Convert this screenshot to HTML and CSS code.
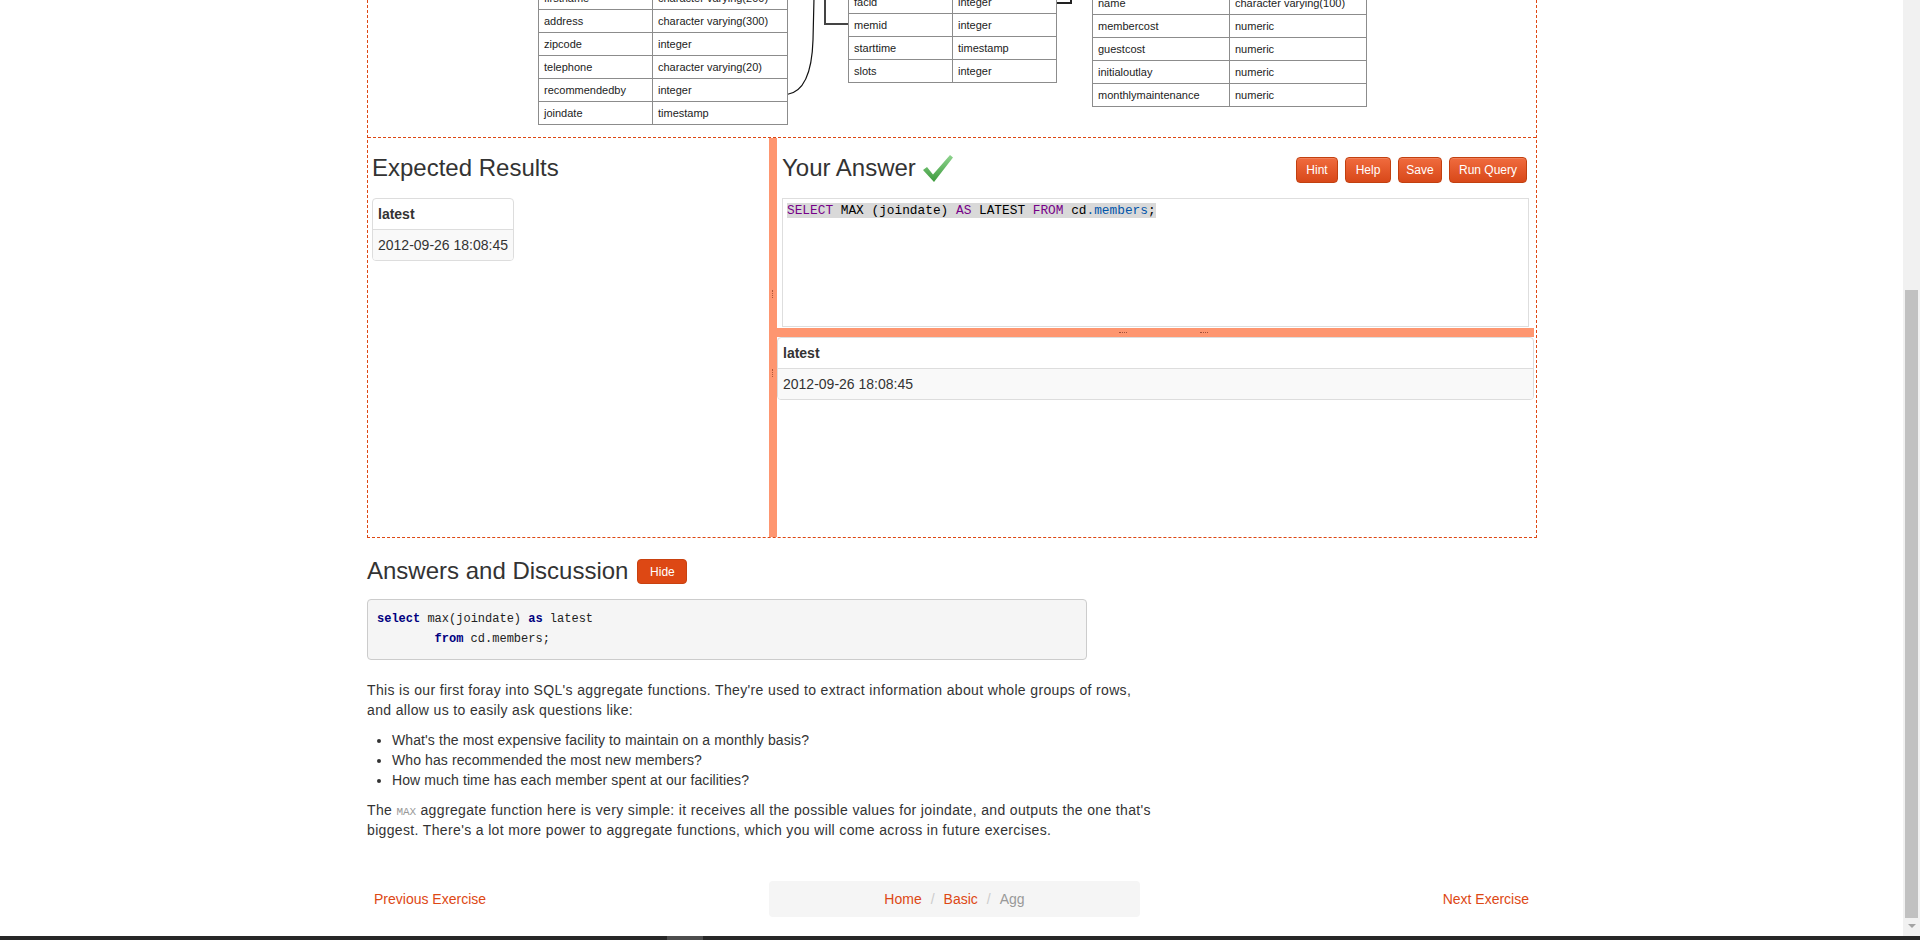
FILE: index.html
```html
<!DOCTYPE html>
<html>
<head>
<meta charset="utf-8">
<title>Exercise - Agg</title>
<link rel="stylesheet" href="styles.css">
</head>
<body>
<div class="page">
  <div class="container">
    <div class="exercise">
      <div class="schema">
        <div class="diagram">
          <svg class="links" width="1168" height="137" viewBox="0 0 1168 137">
            <path d="M419,94.5 C436,92 444,72 445,40 L446,-2" fill="none" stroke="#111" stroke-width="1.2"/>
            <path d="M457,-2 L457,24 L480,24" fill="none" stroke="#444" stroke-width="2"/>
            <path d="M688,3 L703,3 L703,-2" fill="none" stroke="#222" stroke-width="2"/>
          </svg>
          <table class="dtab members">
            <tr><td>memid</td><td>integer</td></tr>
            <tr><td>surname</td><td>character varying(200)</td></tr>
            <tr><td>firstname</td><td>character varying(200)</td></tr>
            <tr><td>address</td><td>character varying(300)</td></tr>
            <tr><td>zipcode</td><td>integer</td></tr>
            <tr><td>telephone</td><td>character varying(20)</td></tr>
            <tr><td>recommendedby</td><td>integer</td></tr>
            <tr><td>joindate</td><td>timestamp</td></tr>
          </table>
          <table class="dtab bookings">
            <tr><td>bookid</td><td>integer</td></tr>
            <tr><td>facid</td><td>integer</td></tr>
            <tr><td>memid</td><td>integer</td></tr>
            <tr><td>starttime</td><td>timestamp</td></tr>
            <tr><td>slots</td><td>integer</td></tr>
          </table>
          <table class="dtab facilities">
            <tr><td>facid</td><td>integer</td></tr>
            <tr><td>name</td><td>character varying(100)</td></tr>
            <tr><td>membercost</td><td>numeric</td></tr>
            <tr><td>guestcost</td><td>numeric</td></tr>
            <tr><td>initialoutlay</td><td>numeric</td></tr>
            <tr><td>monthlymaintenance</td><td>numeric</td></tr>
          </table>
        </div>
      </div>
      <div class="workspace">
        <div class="pane-left">
          <h3 class="pane-title">Expected Results</h3>
          <div class="result result-small">
            <table>
              <tr class="head"><th>latest</th></tr>
              <tr class="data"><td>2012-09-26 18:08:45</td></tr>
            </table>
          </div>
        </div>
        <div class="vsplit"><span class="vgrip vg1"></span><span class="vgrip vg2"></span></div>
        <div class="pane-right">
          <div class="answer-top">
            <div class="answer-head">
              <h3 class="pane-title">Your Answer</h3>
              <svg class="check" width="31" height="27" viewBox="0 0 31 27">
                <defs>
                  <linearGradient id="cg" x1="0" y1="0" x2="0" y2="1">
                    <stop offset="0" stop-color="#8fd48f"/>
                    <stop offset="1" stop-color="#3c9a3c"/>
                  </linearGradient>
                </defs>
                <polygon points="1,15 5,12 11,19.5 28,0 31,2.5 12,27" fill="url(#cg)"/>
              </svg>
              <div class="btns">
                <button class="btn b-hint">Hint</button>
                <button class="btn b-help">Help</button>
                <button class="btn b-save">Save</button>
                <button class="btn b-run">Run Query</button>
              </div>
            </div>
            <div class="editor">
              <div class="cm-line"><span class="sel"><span class="kw">SELECT</span> MAX (joindate) <span class="kw">AS</span> LATEST <span class="kw">FROM</span> cd<span class="var">.members</span>;</span></div>
            </div>
          </div>
          <div class="hsplit"><span class="hgrip hg1"></span><span class="hgrip hg2"></span></div>
          <div class="result result-wide">
            <table>
              <tr class="head"><th>latest</th></tr>
              <tr class="data"><td>2012-09-26 18:08:45</td></tr>
            </table>
          </div>
        </div>
      </div>
    </div>

    <div class="discussion">
      <div class="disc-head">
        <h3 class="disc-title">Answers and Discussion</h3>
        <button class="btn-hide">Hide</button>
      </div>
      <pre class="solution"><b>select</b> max(joindate) <b>as</b> latest
        <b>from</b> cd.members;</pre>
      <div class="text">
        <p>This is our first foray into SQL's aggregate functions. They're used to extract information about whole groups of rows,<br>and allow us to easily ask questions like:</p>
        <ul>
          <li>What's the most expensive facility to maintain on a monthly basis?</li>
          <li>Who has recommended the most new members?</li>
          <li>How much time has each member spent at our facilities?</li>
        </ul>
        <p>The <code>MAX</code> aggregate function here is very simple: it receives all the possible values for joindate, and outputs the one that's<br>biggest. There's a lot more power to aggregate functions, which you will come across in future exercises.</p>
      </div>
    </div>

    <div class="pager">
      <a class="prev" href="#">Previous Exercise</a>
      <div class="crumbs">
        <a href="#">Home</a><span class="sep">/</span><a href="#">Basic</a><span class="sep">/</span><span class="cur">Agg</span>
      </div>
      <a class="next" href="#">Next Exercise</a>
    </div>
  </div>
</div>
<div class="scrollbar"><div class="thumb"></div><div class="arrow"></div></div>
<div class="taskbar"><span class="seg"></span></div>
</body>
</html>
```

FILE: styles.css
```css
* { box-sizing: border-box; }
html, body { margin: 0; height: 100%; overflow: hidden; background: #fff; }
body {
  font-family: "Liberation Sans", Arial, sans-serif;
  font-size: 14px;
  line-height: 20px;
  color: #333;
}
a { color: #dd4814; text-decoration: none; }

.page { width: 1904px; }
.container { width: 1170px; margin: 0 auto; }

/* exercise box */
.exercise { border: 1px dashed #dd4814; border-top: 0; }
.schema {
  height: 138px;
  border-bottom: 1px dashed #dd4814;
  overflow: hidden;
}
.diagram { position: relative; height: 137px; }
.links { position: absolute; left: 0; top: 0; overflow: visible; }

.dtab {
  position: absolute;
  border-collapse: collapse;
  font-family: "Liberation Sans", Arial, sans-serif;
  font-size: 11px;
  color: #1c1c1c;
  background: #fff;
}
.dtab td {
  border: 1px solid #8c8c8c;
  height: 23px;
  padding: 0 0 0 5px;
  line-height: 14px;
  white-space: nowrap;
}
.members { left: 170px; top: -60px; }
.members td:first-child { width: 114px; }
.members td:last-child { width: 135px; }
.bookings { left: 480px; top: -33px; }
.bookings td { width: 104px; }
.facilities { left: 724px; top: -32px; }
.facilities td { width: 137px; }

/* workspace */
.workspace { display: flex; height: 399px; }
.pane-left { width: 401px; padding: 0 4px; }
.vsplit { width: 8px; background: #fe9670; position: relative; }
.vgrip { position: absolute; left: 3px; width: 1px; height: 8px; border-left: 1px dotted #b0583a; }
.vg1 { top: 152px; }
.vg2 { top: 231px; }
.pane-right { flex: 1; display: flex; flex-direction: column; }
.answer-top { padding: 0 7px 0 5px; }

.pane-title {
  margin: 17px 0;
  height: 26px;
  font-size: 24px;
  line-height: 26px;
  font-weight: 400;
  color: #333;
}
.answer-head { display: flex; align-items: flex-start; margin: 17px 0; height: 26px; }
.answer-head .pane-title { margin: 0; }
.check { margin-left: 6px; margin-top: 0; }
.btns { margin-left: auto; margin-right: 2px; margin-top: 2px; display: flex; gap: 7px; }
.btn {
  height: 26px;
  padding: 0;
  border: 1px solid #c2400f;
  border-radius: 4px;
  background: linear-gradient(#f06b3e, #d84819);
  color: #fff;
  font-family: "Liberation Sans", Arial, sans-serif;
  font-size: 12px;
  line-height: 24px;
  text-align: center;
  box-shadow: inset 0 1px 0 rgba(255,255,255,0.15);
}
.b-hint { width: 42px; }
.b-help { width: 46px; }
.b-save { width: 44px; }
.b-run { width: 78px; }

.editor {
  height: 129px;
  border: 1px solid #dedede;
  padding: 4px 4px 0 4px;
  font-family: "Liberation Mono", "DejaVu Sans Mono", monospace;
  font-size: 12.8px;
  line-height: 15px;
  color: #000;
}
.sel { background: #d9d9d9; }
.kw { color: #770088; }
.var { color: #0055aa; }

.hsplit { height: 9px; margin-top: 1px; margin-right: 2px; background: #fe9670; position: relative; }
.hgrip { position: absolute; top: 4px; width: 8px; height: 1px; border-top: 1px dotted #a0503a; }
.hg1 { left: 342px; }
.hg2 { left: 423px; }

.result {
  border: 1px solid #ddd;
  border-radius: 4px;
  overflow: hidden;
}
.result table { width: 100%; border-collapse: separate; border-spacing: 0; }
.result th, .result td { padding: 5px; line-height: 20px; text-align: left; white-space: nowrap; }
.result th { font-weight: 700; }
.result .data td { border-top: 1px solid #ddd; background: #f9f9f9; }
.result-small { display: inline-block; vertical-align: top; min-width: 140px; }
.result-wide { margin-right: 2px; }

/* discussion */
.disc-head { display: flex; align-items: flex-start; margin-top: 20px; height: 26px; }
.disc-title { margin: 0; font-size: 24px; line-height: 26px; font-weight: 400; color: #333; }
.btn-hide {
  margin-left: 9px;
  margin-top: 1px;
  width: 50px;
  height: 25px;
  padding: 0;
  border: 1px solid #c9410f;
  border-radius: 4px;
  background: #dd4814;
  color: #fff;
  font-family: "Liberation Sans", Arial, sans-serif;
  font-size: 12px;
}
.solution {
  width: 720px;
  margin: 15px 0 20px;
  padding: 9px 9px 10px;
  background: #f5f5f5;
  border: 1px solid #ccc;
  border-radius: 4px;
  font-family: "Liberation Mono", "DejaVu Sans Mono", monospace;
  font-size: 12px;
  line-height: 20px;
  color: #222;
}
.solution b { color: #000080; font-weight: 700; }
.text { width: 860px; }
.text p { margin: 0 0 10px; letter-spacing: 0.35px; }
.text ul { margin: 0 0 10px; padding-left: 25px; }
.text li { letter-spacing: 0.1px; }
.text code {
  font-family: "Liberation Mono", monospace;
  font-size: 11px;
  line-height: 0;
  letter-spacing: 0;
  color: #999;
}

/* pager */
.pager {
  display: grid;
  grid-template-columns: 402px 371px 1fr;
  align-items: center;
  margin-top: 41px;
}
.prev { padding-left: 7px; }
.next { text-align: right; padding-right: 8px; }
.crumbs {
  height: 36px;
  padding: 8px 15px;
  background: #f5f5f5;
  border-radius: 4px;
  text-align: center;
}
.crumbs .sep { color: #ccc; padding: 0 9px; }
.crumbs .cur { color: #999; }

/* window chrome overlays */
.scrollbar {
  position: fixed;
  top: 0;
  right: 0;
  width: 17px;
  height: 936px;
  background: #f1f1f1;
}
.thumb {
  position: absolute;
  left: 2px;
  top: 290px;
  width: 13px;
  height: 628px;
  background: #c1c1c1;
}
.arrow {
  position: absolute;
  left: 5px;
  top: 924px;
  width: 0;
  height: 0;
  border-left: 4px solid transparent;
  border-right: 4px solid transparent;
  border-top: 4px solid #a3a3a3;
}
.taskbar {
  position: fixed;
  left: 0;
  right: 0;
  bottom: 0;
  height: 4px;
  background: #272727;
}
.seg { position: absolute; left: 667px; width: 36px; top: 0; height: 4px; background: #4d4d4d; }
```
